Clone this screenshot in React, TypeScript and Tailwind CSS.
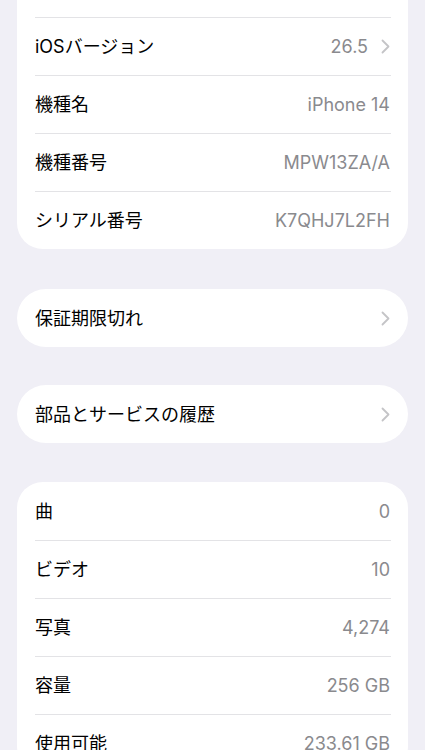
import React from "react";

const Chevron = () => (
  <svg width="9" height="15" viewBox="0 0 9 15" className="ml-[13px] shrink-0">
    <path d="M1.5 1.5 L7.5 7.5 L1.5 13.5" fill="none" stroke="#c4c4c7" strokeWidth="1.8" strokeLinecap="round" strokeLinejoin="round" />
  </svg>
);

type RowProps = { label: string; value?: string; chevron?: boolean; sep?: boolean };

const Row = ({ label, value, chevron, sep }: RowProps) => (
  <div className="flex flex-col">
    {sep && <div className="ml-[18px] mr-[17px] h-px bg-[#e3e3e6]" />}
    <div className={`flex items-center pl-[18px] pr-[18px] ${sep ? "h-[57px]" : "h-[58px]"}`}>
      <span className="flex-1 text-[18px] text-black">{label}</span>
      {value && <span className="text-[18px] text-[#8a8a8e]">{value}</span>}
      {chevron && <Chevron />}
    </div>
  </div>
);

export default function App() {
  return (
    <div
      className="h-[750px] w-[425px] overflow-hidden bg-[#f0eff6] px-[17px]"
      style={{ fontFamily: 'Inter, "Noto Sans CJK JP", sans-serif' }}
    >
      <div className="-mt-[41px] rounded-[26px] bg-white">
        <div className="h-[58px]" />
        <Row label="iOSバージョン" value="26.5" chevron sep />
        <Row label="機種名" value="iPhone 14" sep />
        <Row label="機種番号" value="MPW13ZA/A" sep />
        <Row label="シリアル番号" value="K7QHJ7L2FH" sep />
      </div>
      <div className="mt-[40px] rounded-[29px] bg-white">
        <Row label="保証期限切れ" chevron />
      </div>
      <div className="mt-[38px] rounded-[29px] bg-white">
        <Row label="部品とサービスの履歴" chevron />
      </div>
      <div className="mt-[39px] rounded-[26px] bg-white">
        <Row label="曲" value="0" />
        <Row label="ビデオ" value="10" sep />
        <Row label="写真" value="4,274" sep />
        <Row label="容量" value="256 GB" sep />
        <Row label="使用可能" value="233.61 GB" sep />
      </div>
    </div>
  );
}
